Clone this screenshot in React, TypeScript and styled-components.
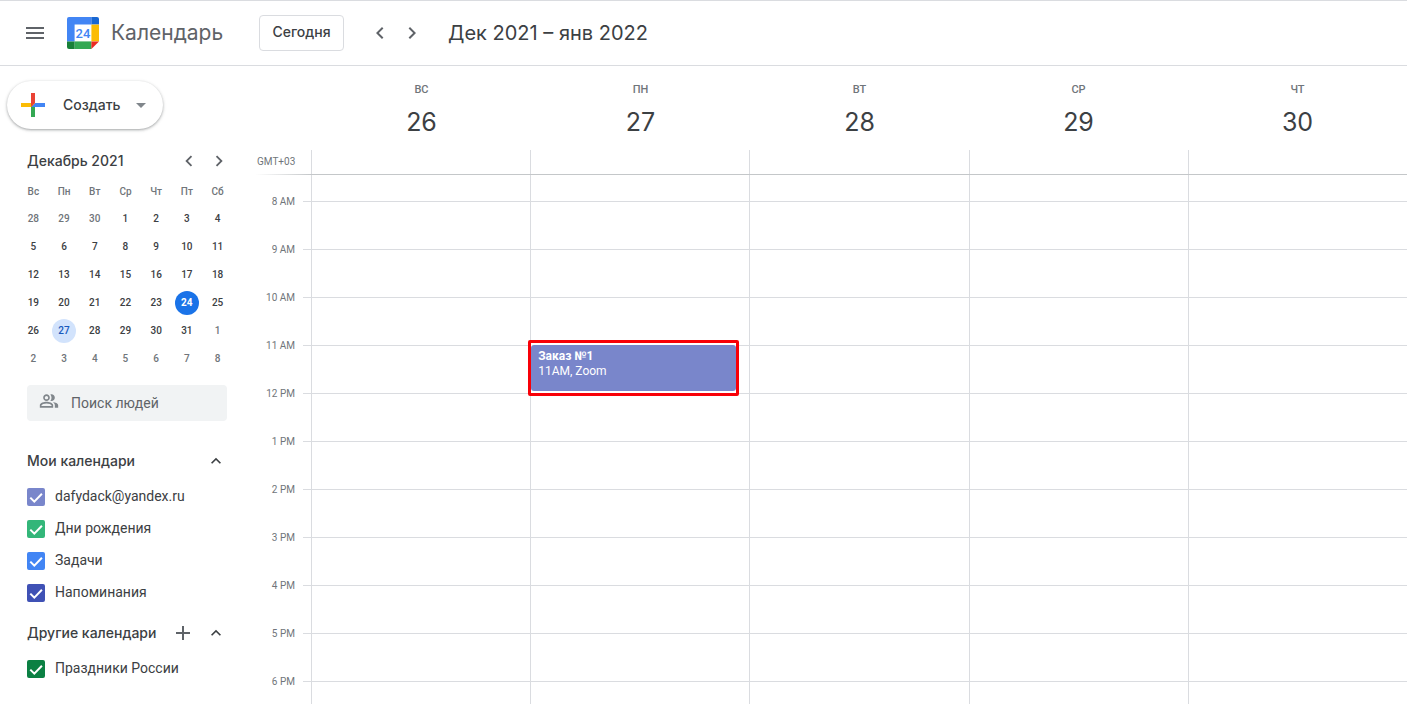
import React from 'react';
import styled, { createGlobalStyle } from 'styled-components';

const display = '"Google Sans", Inter, "Liberation Sans", sans-serif';
const body = 'Roboto, "Liberation Sans", sans-serif';

const GlobalStyle = createGlobalStyle`
  *, *::before, *::after { box-sizing: border-box; }
  body { margin: 0; background: #fff; color: #3c4043; font-family: ${body}; font-size: 14px; }
  button, input { font: inherit; color: inherit; }
  h1, h2, h3 { margin: 0; font-weight: 400; }
`;

const Page = styled.div`
  display: flex;
  flex-direction: column;
  height: 100vh;
  overflow: hidden;
`;

const TopBar = styled.header`
  display: flex;
  align-items: center;
  flex: none;
  height: 66px;
  padding-left: 15px;
  border-top: 1px solid #dadce0;
  border-bottom: 1px solid #dadce0;
`;

const IconButton = styled.button<{ $size: number }>`
  display: flex;
  align-items: center;
  justify-content: center;
  flex: none;
  width: ${p => p.$size}px;
  height: ${p => p.$size}px;
  padding: 0;
  border: 0;
  border-radius: 50%;
  background: none;
  color: #5f6368;
  cursor: pointer;
`;

const Brand = styled.a`
  display: flex;
  align-items: center;
  gap: 12px;
  width: 180px;
  margin: 0 12px;
  color: #5f6368;
  font: 400 21px/24px ${display};
  text-decoration: none;
`;

const TodayButton = styled.button`
  width: 85px;
  height: 36px;
  margin-right: 20px;
  padding: 0 0 2px;
  border: 1px solid #dadce0;
  border-radius: 4px;
  background: #fff;
  font: 500 14px/20px ${display};
  cursor: pointer;
`;

const Period = styled.h1`
  margin-left: 20px;
  font: 400 20px/28px ${display};
`;

const Content = styled.div`
  display: flex;
  flex: 1;
  min-height: 0;
`;

const Sidebar = styled.aside`
  flex: none;
  width: 256px;
  padding: 15px 22px 0 7px;
`;

const CreateButton = styled.button`
  display: flex;
  align-items: center;
  width: 156px;
  height: 48px;
  padding: 0 17px 0 8px;
  border: 0;
  border-radius: 24px;
  background: #fff;
  box-shadow: 0 1px 2px rgba(60, 64, 67, 0.3), 0 1px 3px 1px rgba(60, 64, 67, 0.15);
  font: 500 14px/20px ${display};
  cursor: pointer;

  span { flex: 1; padding-left: 12px; text-align: left; }
`;

const MiniHead = styled.div`
  display: flex;
  align-items: center;
  height: 32px;
  margin-top: 16px;
  padding-left: 20px;

  h2 { flex: 1; font: 500 14px/20px ${display}; }
`;

const MiniTable = styled.table`
  width: 215px;
  margin-left: 11px;
  border-collapse: collapse;
  table-layout: fixed;
  font-size: 10px;

  th, td { height: 28px; padding: 0; text-align: center; }
  th { color: #70757a; font-weight: 500; }
`;

type DayKind = 'in' | 'out' | 'today' | 'picked';
const dayColor = { in: '#3c4043', out: '#70757a', today: '#fff', picked: '#185abc' };
const dayFill = { in: 'none', out: 'none', today: '#1a73e8', picked: '#d2e3fc' };

const MiniDay = styled.button<{ $kind: DayKind }>`
  display: block;
  width: 24px;
  height: 24px;
  margin: 0 auto;
  padding: 0 0 1px;
  border: 0;
  border-radius: 50%;
  background: ${p => dayFill[p.$kind]};
  color: ${p => dayColor[p.$kind]};
  font-size: 10px;
  font-weight: ${p => (p.$kind === 'today' ? 700 : 500)};
  cursor: pointer;
`;

const Search = styled.label`
  display: flex;
  align-items: center;
  gap: 12px;
  width: 200px;
  height: 36px;
  margin: 12px 0 20px 20px;
  padding: 0 12px;
  border-radius: 4px;
  background: #f1f3f4;
  color: #80868b;

  svg { margin-bottom: 4px; }
  input {
    flex: 1;
    min-width: 0;
    padding: 0;
    border: 0;
    outline: 0;
    background: none;
    font-size: 14px;
  }
  input::placeholder { color: #5f6368; opacity: 1; }
`;

const Group = styled.section`
  margin-bottom: 4px;
  padding-left: 20px;
`;

const GroupHead = styled.div`
  display: flex;
  align-items: center;
  height: 40px;
  padding-right: 3px;

  h3 { flex: 1; font: 500 14px/20px ${display}; white-space: nowrap; }
`;

const CalendarItem = styled.label`
  display: flex;
  align-items: center;
  gap: 10px;
  height: 32px;
  cursor: pointer;
`;

const ItemName = styled.span`
  padding-bottom: 2px;
`;

const CheckWrap = styled.span`
  display: grid;
  > * { grid-area: 1 / 1; }
  svg { pointer-events: none; }
`;

const CheckBox = styled.input<{ $color: string }>`
  appearance: none;
  width: 18px;
  height: 18px;
  margin: 0;
  border: 2px solid ${p => p.$color};
  border-radius: 2px;
  &:checked { background: ${p => p.$color}; }
`;

const Main = styled.main`
  display: flex;
  flex-direction: column;
  flex: 1;
  min-width: 0;
`;

const columns = '47px 8px repeat(5, minmax(0, 1fr))';

const DayHeads = styled.div`
  display: grid;
  grid-template-columns: 56px repeat(5, minmax(0, 1fr));
  flex: none;
  height: 84px;
  padding-top: 16px;
`;

const DayHead = styled.h2`
  color: #70757a;
  font: 500 11px/16px ${body};
  text-align: center;

  strong { display: block; margin-top: 8px; color: #3c4043; font: 400 25px/32px ${display}; }
`;

const AllDay = styled.div`
  display: grid;
  grid-template-columns: ${columns};
  flex: none;
  height: 25px;
  border-bottom: 1px solid;
  border-image: linear-gradient(to right, transparent, #c4c7c9 56px) 1;
`;

const Zone = styled.span`
  grid-column: span 2;
  padding-left: 1px;
  color: #70757a;
  font-size: 10px;
  line-height: 24px;
`;

const AllDayCell = styled.div`
  border-left: 1px solid #dadce0;
`;

const Hours = styled.div`
  display: grid;
  grid-template-columns: ${columns};
  flex: 1;
  min-height: 0;
  overflow: hidden;
`;

const TimeLabels = styled.div`
  padding: 3px 8px 0 0;
  color: #70757a;
  font-size: 10px;
  line-height: 48px;
  text-align: right;
  white-space: nowrap;
`;

const HourColumn = styled.div<{ $line?: boolean }>`
  position: relative;
  border-left: ${p => (p.$line ? '1px solid #dadce0' : '0')};
`;

const HourSlot = styled.div`
  height: 48px;
  border-bottom: 1px solid #dadce0;
  &:first-child { height: 27px; }
`;

const EventFrame = styled.div`
  position: absolute;
  z-index: 1;
  top: 165px;
  left: -3px;
  right: 10px;
  height: 56px;
  padding: 2px 0;
  border: 3px solid #f80008;
  border-radius: 2px;
  background: #fff;
`;

const EventCard = styled.button`
  display: block;
  width: 100%;
  height: 46px;
  padding: 4px 7px 12px;
  border: 0;
  border-radius: 3px;
  background: #7986cb;
  color: #fff;
  font-size: 12px;
  line-height: 15px;
  text-align: left;
  cursor: pointer;

  strong, span { display: block; }
`;

const ChevronLeft = ({ size = 24 }: { size?: number }) => (
  <svg width={size} height={size} viewBox="0 0 24 24" fill="currentColor"><path d="M15.41 7.41 14 6l-6 6 6 6 1.41-1.41L10.83 12z" /></svg>
);
const ChevronRight = ({ size = 24 }: { size?: number }) => (
  <svg width={size} height={size} viewBox="0 0 24 24" fill="currentColor"><path d="M10 6 8.59 7.41 13.17 12l-4.58 4.59L10 18l6-6z" /></svg>
);
const ChevronUp = () => (
  <svg width="20" height="20" viewBox="0 0 24 24" fill="#3c4043"><path d="m12 8-6 6 1.41 1.41L12 10.83l4.59 4.58L18 14z" /></svg>
);
const MenuIcon = () => (
  <svg width="24" height="24" viewBox="0 0 24 24" fill="currentColor"><path d="M3 18h18v-2H3v2zm0-5h18v-2H3v2zm0-7v2h18V6H3z" /></svg>
);
const AddIcon = () => (
  <svg width="24" height="24" viewBox="0 0 24 24" fill="currentColor"><path d="M11 5h2v6h6v2h-6v6h-2v-6H5v-2h6z" /></svg>
);
const PeopleIcon = () => (
  <svg width="20" height="20" viewBox="0 0 24 24" fill="currentColor">
    <path d="M9 12c2.21 0 4-1.79 4-4s-1.79-4-4-4-4 1.79-4 4 1.79 4 4 4zm0-6c1.1 0 2 .9 2 2s-.9 2-2 2-2-.9-2-2 .9-2 2-2zm0 7c-2.67 0-8 1.34-8 4v3h16v-3c0-2.66-5.33-4-8-4zm6 5H3v-.99C3.2 16.29 6.3 15 9 15s5.8 1.29 6 2v1zM15 12c2.21 0 4-1.79 4-4s-1.79-4-4-4c-.47 0-.91.1-1.33.24C14.5 5.27 15 6.58 15 8s-.5 2.73-1.33 3.76c.42.14.86.24 1.33.24zm1.66 1.13C18.03 14.06 19 15.32 19 17v3h4v-3c0-2.18-3.58-3.47-6.34-3.87z" />
  </svg>
);
const PlusLogo = () => (
  <svg width="36" height="36" viewBox="0 0 36 36">
    <path fill="#34a853" d="M16 16v14h4V20z" />
    <path fill="#4285f4" d="M30 16H20l-4 4h14z" />
    <path fill="#fbbc05" d="M6 16v4h10l4-4z" />
    <path fill="#ea4335" d="M20 16V6h-4v14z" />
  </svg>
);
const CalendarLogo = () => (
  <svg width="32" height="32" viewBox="0 0 32 32">
    <path fill="#fff" d="M7.6 7.6h16.8v16.8H7.6z" />
    <path fill="#4285f4" d="M2 0h22.4v7.6H7.6v16.8H0V2a2 2 0 0 1 2-2z" />
    <path fill="#1967d2" d="M24.4 0H30a2 2 0 0 1 2 2v5.6h-7.6z" />
    <path fill="#fbbc04" d="M24.4 7.6H32v16.8h-7.6z" />
    <path fill="#34a853" d="M7.6 24.4h16.8V32H7.6z" />
    <path fill="#188038" d="M0 24.4h7.6V32H2a2 2 0 0 1-2-2z" />
    <path fill="#ea2a24" d="M24.4 24.4H32L24.4 32z" />
    <text x="16" y="20.6" textAnchor="middle" fill="#4285f4" fontFamily="Roboto, sans-serif" fontWeight="500" fontSize="13">24</text>
  </svg>
);

const weekdays = ['Вс', 'Пн', 'Вт', 'Ср', 'Чт', 'Пт', 'Сб'];
const gridStart = new Date(2021, 10, 28);
const weeks = Array.from({ length: 6 }, (_, w) =>
  Array.from({ length: 7 }, (_, d) => {
    const date = new Date(gridStart);
    date.setDate(gridStart.getDate() + w * 7 + d);
    const n = date.getDate();
    const kind: DayKind = date.getMonth() !== 11 ? 'out' : n === 24 ? 'today' : n === 27 ? 'picked' : 'in';
    return { n, kind };
  })
);

const days = [
  { name: 'ВС', n: 26 },
  { name: 'ПН', n: 27 },
  { name: 'ВТ', n: 28 },
  { name: 'СР', n: 29 },
  { name: 'ЧТ', n: 30 },
];
const hours = ['8 AM', '9 AM', '10 AM', '11 AM', '12 PM', '1 PM', '2 PM', '3 PM', '4 PM', '5 PM', '6 PM'];

const mine = [
  { name: 'dafydack@yandex.ru', color: '#7986cb' },
  { name: 'Дни рождения', color: '#33b679' },
  { name: 'Задачи', color: '#4285f4' },
  { name: 'Напоминания', color: '#3f51b5' },
];
const others = [{ name: 'Праздники России', color: '#0b8043' }];

const CalendarList = ({ items }: { items: { name: string; color: string }[] }) => (
  <>
    {items.map(item => (
      <CalendarItem key={item.name}>
        <CheckWrap>
          <CheckBox type="checkbox" defaultChecked $color={item.color} />
          <svg width="18" height="18" viewBox="0 0 18 18" fill="none" stroke="#fff" strokeWidth="2">
            <path d="m3.3 9.6 4 4 7.6-7.8" />
          </svg>
        </CheckWrap>
        <ItemName>{item.name}</ItemName>
      </CalendarItem>
    ))}
  </>
);

const Slots = () => (
  <>
    {hours.map(h => (
      <HourSlot key={h} />
    ))}
  </>
);

export default function App() {
  return (
    <Page>
      <GlobalStyle />
      <TopBar>
        <IconButton $size={40} aria-label="Главное меню"><MenuIcon /></IconButton>
        <Brand href="#"><CalendarLogo />Календарь</Brand>
        <TodayButton>Сегодня</TodayButton>
        <IconButton $size={32} aria-label="Назад"><ChevronLeft /></IconButton>
        <IconButton $size={32} aria-label="Вперёд"><ChevronRight /></IconButton>
        <Period>Дек 2021 – янв 2022</Period>
      </TopBar>
      <Content>
        <Sidebar>
          <CreateButton>
            <PlusLogo />
            <span>Создать</span>
            <svg width="10" height="5" viewBox="0 0 10 5"><path fill="#80868b" d="M0 0h10L5 5z" /></svg>
          </CreateButton>
          <MiniHead>
            <h2>Декабрь 2021</h2>
            <IconButton $size={30} aria-label="Предыдущий месяц"><ChevronLeft size={22} /></IconButton>
            <IconButton $size={30} aria-label="Следующий месяц"><ChevronRight size={22} /></IconButton>
          </MiniHead>
          <MiniTable>
            <thead>
              <tr>{weekdays.map(d => <th key={d} scope="col">{d}</th>)}</tr>
            </thead>
            <tbody>
              {weeks.map((week, i) => (
                <tr key={i}>
                  {week.map(d => (
                    <td key={d.n}><MiniDay $kind={d.kind}>{d.n}</MiniDay></td>
                  ))}
                </tr>
              ))}
            </tbody>
          </MiniTable>
          <Search>
            <PeopleIcon />
            <input type="text" placeholder="Поиск людей" aria-label="Поиск людей" />
          </Search>
          <Group>
            <GroupHead>
              <h3>Мои календари</h3>
              <IconButton $size={30} aria-label="Свернуть"><ChevronUp /></IconButton>
            </GroupHead>
            <CalendarList items={mine} />
          </Group>
          <Group>
            <GroupHead>
              <h3>Другие календари</h3>
              <IconButton $size={36} aria-label="Добавить календарь"><AddIcon /></IconButton>
              <IconButton $size={30} aria-label="Свернуть"><ChevronUp /></IconButton>
            </GroupHead>
            <CalendarList items={others} />
          </Group>
        </Sidebar>
        <Main>
          <DayHeads>
            <span />
            {days.map(d => (
              <DayHead key={d.n}>{d.name}<strong>{d.n}</strong></DayHead>
            ))}
          </DayHeads>
          <AllDay>
            <Zone>GMT+03</Zone>
            {days.map(d => <AllDayCell key={d.n} />)}
          </AllDay>
          <Hours>
            <TimeLabels>
              {hours.map(h => <div key={h}>{h}</div>)}
            </TimeLabels>
            <HourColumn><Slots /></HourColumn>
            {days.map(d => (
              <HourColumn key={d.n} $line>
                <Slots />
                {d.n === 27 && (
                  <EventFrame>
                    <EventCard>
                      <strong>Заказ №1</strong>
                      <span>11AM, Zoom</span>
                    </EventCard>
                  </EventFrame>
                )}
              </HourColumn>
            ))}
          </Hours>
        </Main>
      </Content>
    </Page>
  );
}
